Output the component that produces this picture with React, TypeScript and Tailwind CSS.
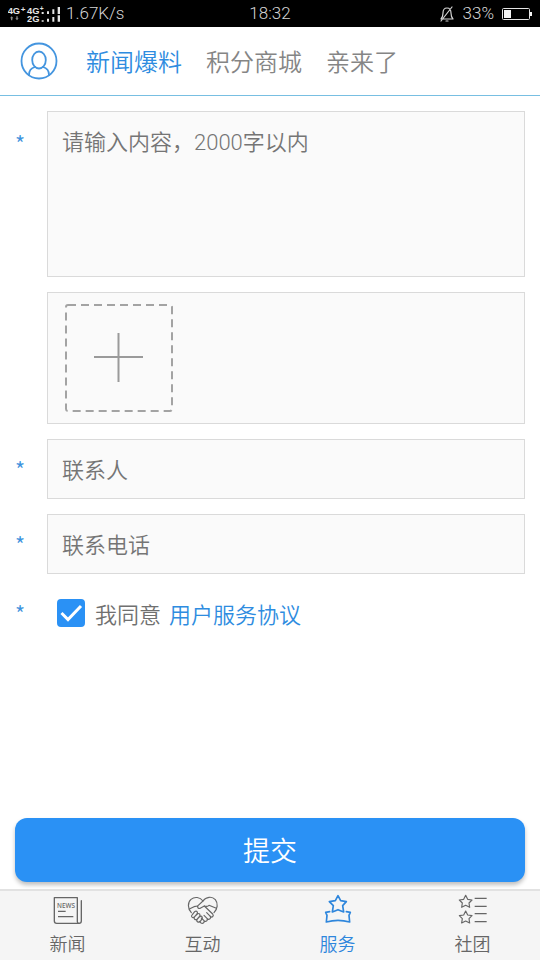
import React, { useState } from "react"

const NewsIcon = () => (
  <svg className="h-[30px] w-8" viewBox="155 282 96 90" fill="none" stroke="currentColor" strokeWidth="4" strokeLinejoin="round">
    <path d="M162 293H231V365Q231 370 236 370H169Q162 370 162 363Z" />
    <path d="M231 370H236Q243 370 243 363V302" strokeLinecap="round" />
    <path d="M173 334H196M173 350H219" strokeWidth="3.5" />
    <text x="170" y="323" fontSize="19" fontFamily="Noto Sans" fontWeight="500" fill="currentColor" stroke="none">
      NEWS
    </text>
  </svg>
)

const HandsIcon = () => (
  <svg className="h-[30px] w-8" viewBox="50 27 96 90" fill="none" stroke="currentColor" strokeWidth="3.5" strokeLinecap="round" strokeLinejoin="round">
    <path d="M63 83C52 72 51 52 62 43C73 34 89 36 98 48C107 35 125 33 135 44C144 55 142 72 131 83" />
    <path d="M98 48L83 62C79 67 85 73 91 69L102 63L127 87C132 93 125 99 120 94L109 83" />
    <path d="M102 63Q110 66 116 61L138 70M82 63L71 65L57 72" />
    <path d="M120 94C123 101 115 106 110 100L101 91M110 100C113 108 106 112 101 107L93 99M101 107C103 114 97 117 91 113L87 109" />
    <path d="M66 89L73 80C78 76 84 80 80 87L73 95C67 101 60 95 66 89ZM73 95L81 87C87 83 92 89 87 95L81 102C75 107 68 101 73 95ZM81 102L88 95C94 91 99 97 94 103L90 109C84 115 76 109 81 102Z" />
  </svg>
)

const ServiceIcon = () => (
  <svg className="h-[30px] w-8" viewBox="65 27 96 90" fill="none" stroke="currentColor" strokeWidth="5" strokeLinecap="round" strokeLinejoin="round">
    <path d="M113 32L121 47L138 50L127 62L130 81L113 74L96 81L99 62L87 50L105 47Z" />
    <path d="M88 80L76 82L80 91L78 111Q113 101 148 111L146 91L150 82L138 80" />
  </svg>
)

const ClubIcon = () => (
  <svg className="h-[30px] w-8" viewBox="50 27 96 90" fill="none" stroke="currentColor" strokeWidth="3.5" strokeLinejoin="round">
    <path d="M76 31L82 43L95 45L86 54L88 67L76 61L64 67L66 54L57 45L70 43Z" />
    <path d="M76 78L82 90L95 92L86 101L88 114L76 108L64 114L66 101L57 92L70 90Z" />
    <path d="M103 40H139M103 64H139M103 86H139M103 110H139" />
  </svg>
)

const SignalIcon = () => (
  <svg className="h-5 w-[54px]" viewBox="21 9 162 60" fill="#e5e5e5" fontFamily="Liberation Sans" fontWeight="bold">
    <text x="20" y="38" fontSize="28">4G</text>
    <text x="59" y="33" fontSize="24">+</text>
    <text x="78" y="38" fontSize="28">4G</text>
    <text x="116" y="30" fontSize="20">+</text>
    <text x="78" y="63" fontSize="28">2G</text>
    <path d="M32 46L37 52H34V58H30V52H27ZM48 58L43 52H46V46H50V52H53Z" fill="#8a8a8a" />
    <path d="M122 33H128V39H122ZM138 31H144V39H138ZM154 25H160V39H154ZM170 18H177V39H170ZM122 58H128V62H122ZM138 53H144V62H138ZM154 48H160V62H154ZM170 43H177V62H170Z" />
  </svg>
)

const MuteIcon = () => (
  <svg className="h-[18px] w-4" viewBox="0 0 16 18" fill="none" stroke="#d4d4d4" strokeWidth="1.2" strokeLinecap="round" strokeLinejoin="round">
    <path d="M2 14C4 12 4 11 4 8C4 5 5 3 8 3C11 3 12 5 12 8C12 11 12 12 14 14ZM7 16H9M13 2L2 16" />
  </svg>
)

const BatteryIcon = () => (
  <svg className="h-3 w-[30px]" viewBox="0 0 30 12" fill="none">
    <rect x="0.5" y="0.5" width="27" height="11" rx="1" stroke="#e5e5e5" />
    <path d="M2 2H9V10H2ZM28 4H30V8H28Z" fill="#f5f5f5" />
  </svg>
)

const Star = () => (
  <span className="w-8 shrink-0 text-[22px] leading-8 text-[#3d93dd]" aria-hidden="true">
    *
  </span>
)

const tabs = ["新闻爆料", "积分商城", "亲来了"]

const navItems = [
  { label: "新闻", Icon: NewsIcon },
  { label: "互动", Icon: HandsIcon },
  { label: "服务", Icon: ServiceIcon },
  { label: "社团", Icon: ClubIcon },
]

const App = () => {
  const [agreed, setAgreed] = useState(true)
  const [activeTab, setActiveTab] = useState("新闻爆料")

  return (
    <div className="flex min-h-screen flex-col bg-white font-['Noto_Sans_CJK_SC',sans-serif] font-[350] text-[#707070]">
      <div className="grid h-[27px] grid-cols-3 items-center bg-black px-2 font-[Roboto,sans-serif] text-[17px] font-light text-[#d4d4d4]">
        <div className="flex items-center gap-1">
          <SignalIcon />
          1.67K/s
        </div>
        <div className="text-center">18:32</div>
        <div className="flex items-center justify-end gap-2">
          <MuteIcon />
          33%
          <BatteryIcon />
        </div>
      </div>

      <header className="flex h-[69px] items-center gap-6 border-b border-solid border-b-[#78bfe2] px-5">
        <button type="button" aria-label="个人中心" className="mr-1">
          <svg className="h-[38px] w-[38px]" viewBox="0 0 38 38" fill="none" stroke="#4495df" strokeWidth="1.8">
            <circle cx="19" cy="19" r="17.5" />
            <ellipse cx="19" cy="18" rx="6.8" ry="8.5" />
            <path d="M9 33C9 29 11 26 15 25M29 33C29 29 27 26 23 25" strokeLinecap="round" />
          </svg>
        </button>
        {tabs.map((tab) => (
          <button
            key={tab}
            type="button"
            onClick={() => setActiveTab(tab)}
            className={activeTab === tab ? "text-2xl text-[#2e8ce0]" : "text-2xl text-[#858585]"}
          >
            {tab}
          </button>
        ))}
      </header>

      <form className="flex flex-1 flex-col gap-[15px] px-[15px] pt-[15px] pb-[7px]" onSubmit={(e) => e.preventDefault()}>
        <div className="flex items-start">
          <div className="flex w-8 shrink-0 pt-4">
            <Star />
          </div>
          <textarea
            aria-label="内容"
            maxLength={2000}
            placeholder="请输入内容，2000字以内"
            className="block h-[166px] min-w-0 flex-1 resize-none border border-[#dadada] bg-[#fafafa] px-[14px] py-[15px] font-[Roboto,'Noto_Sans_CJK_SC',sans-serif] text-[22px] leading-8 outline-none placeholder:text-[#757575]"
          />
        </div>

        <div className="ml-8 border border-[#dadada] bg-[#fafafa] px-[17px] py-[11px]">
          <button type="button" aria-label="添加图片" className="block">
            <svg className="h-[108px] w-[108px]" viewBox="0 0 108 108" fill="none" stroke="#a3a3a3" strokeWidth="2">
              <rect x="1" y="1" width="106" height="106" rx="2" strokeDasharray="8 5" />
              <path d="M29 53H78M53.500 29V78" stroke="#9a9a9a" />
            </svg>
          </button>
        </div>

        <div className="flex items-center">
          <Star />
          <input
            type="text"
            aria-label="联系人"
            placeholder="联系人"
            className="h-[60px] min-w-0 flex-1 border border-[#dadada] bg-[#fafafa] px-[14px] pb-[2px] text-[22px] outline-none placeholder:text-[#757575]"
          />
        </div>

        <div className="flex items-center">
          <Star />
          <input
            type="tel"
            aria-label="联系电话"
            placeholder="联系电话"
            className="h-[60px] min-w-0 flex-1 border border-[#dadada] bg-[#fafafa] px-[14px] pb-[2px] text-[22px] outline-none placeholder:text-[#757575]"
          />
        </div>

        <div className="flex items-center pt-2 text-[22px] leading-8">
          <Star />
          <label className="ml-[10px] flex items-center gap-[10px]">
            <span className="relative">
              <input
                type="checkbox"
                checked={agreed}
                onChange={(e) => setAgreed(e.target.checked)}
                className="peer block h-7 w-7 appearance-none rounded-sm border-2 border-[#2a91f5] bg-white checked:bg-[#2a91f5]"
              />
              <svg className="pointer-events-none absolute inset-0 hidden h-7 w-7 peer-checked:block" viewBox="0 0 28 28" fill="none" stroke="#fff" strokeWidth="3">
                <path d="M4.500 14L11 20.500L24 7" />
              </svg>
            </span>
            我同意
          </label>
          <a href="#agreement" className="ml-2 text-[#2e8ce0]">
            用户服务协议
          </a>
        </div>

        <button type="submit" className="mt-auto h-16 rounded-xl bg-[#2a91f5] text-[27px] text-white shadow-[0_3px_4px_rgba(0,0,0,0.25)]">
          提交
        </button>
      </form>

      <nav className="grid grid-cols-4 border-t-2 border-[#e2e2e2] bg-[#f5f5f5] pt-[3px] pb-[3px]">
        {navItems.map(({ label, Icon }) => (
          <a
            key={label}
            href="#nav"
            className={
              label === "服务"
                ? "flex flex-col items-center gap-[5px] text-lg text-[#2e86dc]"
                : "flex flex-col items-center gap-[5px] text-lg text-[#666]"
            }
          >
            <Icon />
            {label}
          </a>
        ))}
      </nav>
    </div>
  )
}

export default App
